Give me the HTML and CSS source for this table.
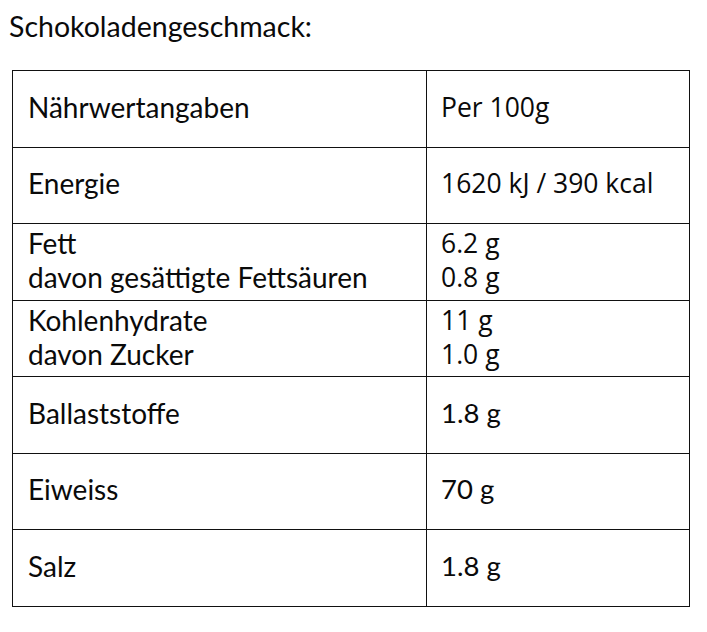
FILE: index.html
```html
<!DOCTYPE html>
<html lang="de">
<head>
<meta charset="utf-8">
<link rel="stylesheet" href="styles.css">
</head>
<body>
<div class="page">
  <h1 class="title">Schokoladengeschmack:</h1>
  <table class="nutri">
    <colgroup><col class="c1"><col class="c2"></colgroup>
    <tr><td class="lbl">Nährwertangaben</td><td class="val">Per 100g</td></tr>
    <tr><td class="lbl">Energie</td><td class="val">1620 kJ / 390 kcal</td></tr>
    <tr class="two"><td class="lbl">Fett<br>davon gesättigte Fettsäuren</td><td class="val">6.2 g<br>0.8 g</td></tr>
    <tr class="two"><td class="lbl">Kohlenhydrate<br>davon Zucker</td><td class="val">11 g<br>1.0 g</td></tr>
    <tr><td class="lbl">Ballaststoffe</td><td class="val narrow">1.8 g</td></tr>
    <tr><td class="lbl">Eiweiss</td><td class="val narrow">70 g</td></tr>
    <tr><td class="lbl">Salz</td><td class="val narrow">1.8 g</td></tr>
  </table>
</div>
</body>
</html>
```
FILE: styles.css
```css
html, body { margin: 0; padding: 0; background: #fff; }
.page {
  padding: 9px 0 0 9px;
  font-family: "Lato", "Open Sans", sans-serif;
  color: #0a0a0a;
}
.title {
  margin: 0 0 27px 0;
  font-size: 28.5px;
  font-weight: 400;
  line-height: 34px;
}
.nutri {
  margin-left: 3px;
  border-collapse: collapse;
  width: 677px;
  table-layout: fixed;
}
.c1 { width: 414px; }
.c2 { width: 263px; }
.nutri td {
  border: 1px solid #111;
  height: 76.5px;
  padding: 0 0 4px 15px;
  vertical-align: middle;
  font-size: 28px;
  line-height: 34px;
  box-sizing: border-box;
}
.nutri tr.two td { vertical-align: top; padding-top: 2px; padding-bottom: 0; }
.nutri td.val { font-family: "Open Sans", sans-serif; font-size: 26.5px; padding-left: 14px; }
.nutri td.val.narrow { font-family: "Lato", sans-serif; font-size: 27.5px; }
```
